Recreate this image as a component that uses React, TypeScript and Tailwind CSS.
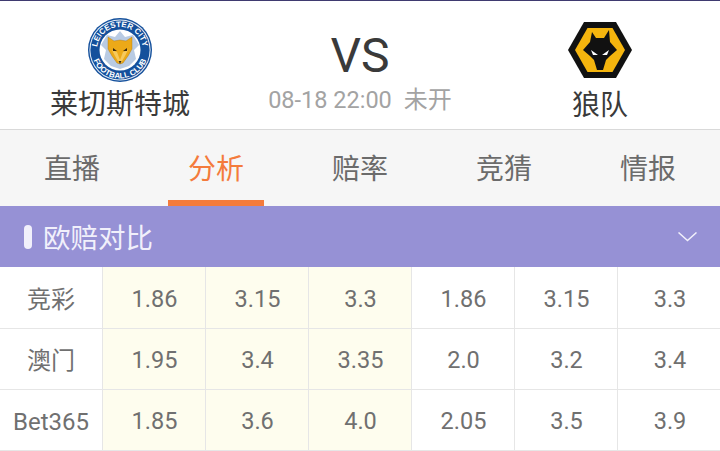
const tabs = ["直播", "分析", "赔率", "竞猜", "情报"]

const rows = [
  { name: "竞彩", odds: ["1.86", "3.15", "3.3", "1.86", "3.15", "3.3"] },
  { name: "澳门", odds: ["1.95", "3.4", "3.35", "2.0", "3.2", "3.4"] },
  { name: "Bet365", odds: ["1.85", "3.6", "4.0", "2.05", "3.5", "3.9"] },
]

function LeicesterLogo() {
  return (
    <svg width="64" height="64" viewBox="0 0 64 64">
      <circle cx="32" cy="32" r="32" fill="#14509c" />
      <circle cx="32" cy="32" r="30.6" fill="#e8eef6" />
      <circle cx="32" cy="32" r="29.6" fill="#14509c" />
      <circle cx="32" cy="32" r="20.5" fill="#fff" />
      <defs>
        <path id="lc-top" d="M 9 32 A 23 23 0 0 1 55 32" />
        <path id="lc-bottom" d="M 3.6 32 A 28.4 28.4 0 0 0 60.4 32" />
      </defs>
      <text fontFamily="Liberation Sans, sans-serif" fontSize="8" fontWeight="700" fill="#fff" textAnchor="middle">
        <textPath href="#lc-top" startOffset="50%">LEICESTER CITY</textPath>
      </text>
      <text fontFamily="Liberation Sans, sans-serif" fontSize="8" fontWeight="700" fill="#fff" textAnchor="middle">
        <textPath href="#lc-bottom" startOffset="50%">FOOTBALL CLUB</textPath>
      </text>
      <path d="M32 13 L37 19 L45 17 L51 27 L46 32 L48 41 L41 48 L32 51 L23 48 L16 41 L18 32 L13 27 L19 17 L27 19 Z" fill="#b9cbe3" />
      <path d="M20 19 L26 23 L32 22 L38 23 L44 19 L44 31 L40 38 L35 45 L32 46 L29 45 L24 38 L20 31 Z" fill="#eca918" stroke="#a8730f" strokeWidth="0.4" />
      <path d="M24 32 L29 34 L32 42 L35 34 L40 32 L37 38 L33 45 L31 45 L27 38 Z" fill="#f6ca5e" />
      <path d="M25 30 L29 33 L25 33 Z M39 30 L35 33 L39 33 Z" fill="#3a2a10" />
      <path d="M30.5 43 H33.5 L32 46 Z" fill="#3a2a10" />
    </svg>
  )
}

function WolvesLogo() {
  return (
    <svg width="64" height="56" viewBox="0 0 64 56">
      <path d="M16 0 H48 L64 28 L48 56 H16 L0 28 Z" fill="#111" />
      <path d="M19.5 6 H44.5 L57 28 L44.5 50 H19.5 L7 28 Z" fill="#f5b50e" />
      <path d="M24 10 L28 16 H36 L41 8 L42 20 L49 28 L42 34 L38 38 L35 48 H29 L26 38 L22 34 L15 28 L22 20 Z" fill="#111" />
      <path d="M23 28 L30 33 L25 33 Z M41 28 L34 33 L39 33 Z" fill="#fff" />
    </svg>
  )
}

export default function App() {
  return (
    <div className="w-[720px] h-[451px] overflow-hidden bg-white font-['Roboto','Noto_Sans_CJK_SC',sans-serif]">
      <div className="h-px bg-[#3f3a70]" />

      {/* match header */}
      <div className="grid grid-cols-3 h-[129px] border-b border-[#d9d9d9]">
        <div className="flex flex-col items-center pt-[17px]">
          <LeicesterLogo />
          <div className="text-[28px] leading-[40px] text-[#3a3a3a] mt-[3px]">莱切斯特城</div>
        </div>
        <div className="flex flex-col items-center pt-[27px]">
          <div className="text-[48px] leading-[56px] text-[#3a3a3a]">VS</div>
          <div className="flex items-center gap-3 text-[24px] leading-[32px] text-[#a3a3a3]">
            <span className="text-[23.5px]">08-18 22:00</span>
            <span>未开</span>
          </div>
        </div>
        <div className="flex flex-col items-center pt-[21px]">
          <WolvesLogo />
          <div className="text-[28px] leading-[40px] text-[#3a3a3a] mt-[8px]">狼队</div>
        </div>
      </div>

      {/* tabs */}
      <div className="grid grid-cols-5 h-[76px] bg-[#f6f6f6]">
        {tabs.map((tab, i) => (
          <div key={tab} className="relative flex items-center justify-center pt-[4px]">
            <span className={`text-[28px] ${i === 1 ? "text-[#f47b3c]" : "text-[#6b6b6b]"}`}>{tab}</span>
            {i === 1 && <div className="absolute bottom-0 left-[24px] w-[96px] h-[6px] bg-[#f47b3c]" />}
          </div>
        ))}
      </div>

      {/* section bar */}
      <div className="flex items-center justify-between h-[61px] bg-[#9691d5] pl-6 pr-[23px]">
        <div className="flex items-center gap-[11px]">
          <div className="w-2 h-6 rounded bg-[#f1f0fb]" />
          <span className="text-[27.5px] text-[#f1f0fb] pt-[4px]">欧赔对比</span>
        </div>
        <svg width="19" height="10" viewBox="0 0 19 10" fill="none" stroke="#f1f0fb" strokeWidth="1.5">
          <path d="M0.5 0.5 L9.5 8.5 L18.5 0.5" />
        </svg>
      </div>

      {/* odds table */}
      <div>
        {rows.map((row) => (
          <div key={row.name} className="flex h-[61px] first:h-[62px] border-b border-[#e6e6e6] text-[24px] text-[#707070]">
            <div className="flex items-center justify-center w-[103px] shrink-0 pt-[4px] border-r border-[#e6e6e6]">{row.name}</div>
            {row.odds.map((odd, i) => (
              <div
                key={i}
                className={`flex items-center justify-center w-[103px] shrink-0 pt-[4px] pl-px text-[23.5px] border-r border-[#e6e6e6] last:border-r-0 ${i < 3 ? "bg-[#fefdee]" : ""}`}
              >
                {odd}
              </div>
            ))}
          </div>
        ))}
      </div>
    </div>
  )
}
